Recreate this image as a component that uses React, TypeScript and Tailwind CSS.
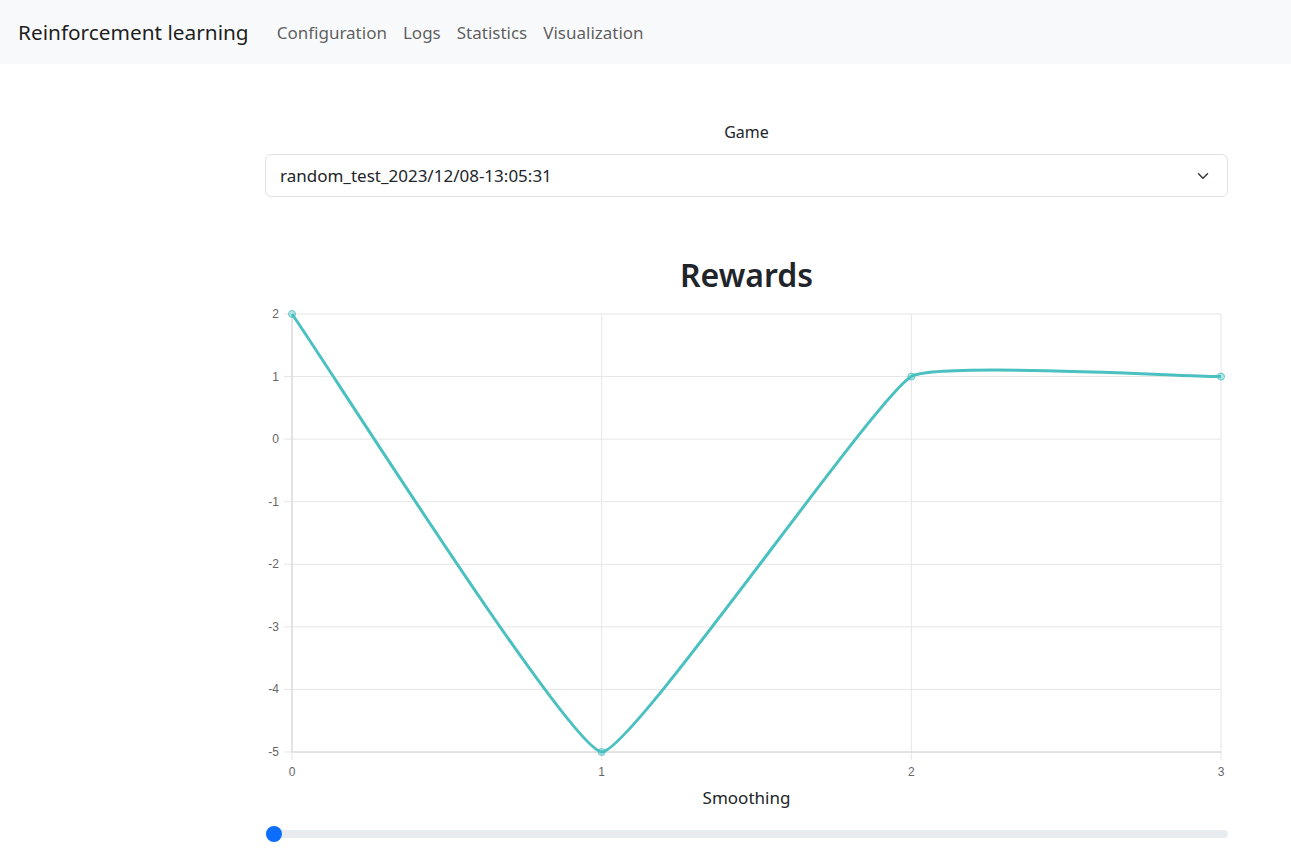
import React from 'react';

const font = { fontFamily: '"Noto Sans", "Open Sans", sans-serif' };

// chart geometry (svg coords, origin at x=265,y=300 of the page)
const LEFT = 27;
const RIGHT = 956;
const TOP = 14;
const BOTTOM = 452;
const yTicks = [2, 1, 0, -1, -2, -3, -4, -5];
const xTicks = [0, 1, 2, 3];
const yPx = (v: number) => TOP + ((2 - v) * (BOTTOM - TOP)) / 7;
const xPx = (i: number) => LEFT + (i * (RIGHT - LEFT)) / 3;

function RewardsChart() {
    const pts = [
        [xPx(0), yPx(2)],
        [xPx(1), yPx(-5)],
        [xPx(2), yPx(1)],
        [xPx(3), yPx(1)],
    ];
    // chart.js style cubic curve, tension 0.1
    const d =
        `M ${pts[0][0]} ${pts[0][1]} ` +
        `C 58 57.8, 304.5 448.7, ${pts[1][0]} ${pts[1][1]} ` +
        `C 366.4 452, 608.2 99.5, ${pts[2][0]} ${pts[2][1]} ` +
        `C 670.1 62, 925 76.6, ${pts[3][0]} ${pts[3][1]}`;

    return (
        <svg width={963} height={486} className="block mt-[6px]" style={{ fontFamily: '"Liberation Sans", Arial, sans-serif' }}>
            {yTicks.map((v) => (
                <g key={v}>
                    <line x1={19} x2={RIGHT} y1={yPx(v)} y2={yPx(v)} stroke="#e6e6e6" strokeWidth={1} />
                    <text x={14} y={yPx(v) + 4} textAnchor="end" fontSize={12} fill="#666">
                        {v}
                    </text>
                </g>
            ))}
            {xTicks.map((i) => (
                <g key={i}>
                    <line x1={xPx(i)} x2={xPx(i)} y1={TOP} y2={460} stroke="#e6e6e6" strokeWidth={1} />
                    <text x={xPx(i)} y={476} textAnchor="middle" fontSize={12} fill="#666">
                        {i}
                    </text>
                </g>
            ))}
            <line x1={LEFT} x2={LEFT} y1={TOP} y2={BOTTOM} stroke="#d4d4d4" strokeWidth={1} />
            <line x1={LEFT} x2={RIGHT} y1={BOTTOM} y2={BOTTOM} stroke="#d4d4d4" strokeWidth={1} />
            <path d={d} fill="none" stroke="rgb(75,192,192)" strokeWidth={3} strokeLinejoin="round" />
            {pts.map(([x, y], i) => (
                <circle key={i} cx={x} cy={y} r={3.5} fill="rgba(75,192,192,0.4)" stroke="rgba(75,192,192,0.8)" strokeWidth={1} />
            ))}
        </svg>
    );
}

export default function App() {
    return (
        <div className="min-h-screen bg-white text-[#212529]" style={font}>
            <nav className="h-16 bg-[#f8f9fa] flex items-center px-[18px] pt-[2px]">
                <span className="text-[20.8px] text-black/90 mr-[28px]">Reinforcement learning</span>
                <div className="flex items-center gap-[16px] text-[17px] text-black/65">
                    <span>Configuration</span>
                    <span>Logs</span>
                    <span>Statistics</span>
                    <span>Visualization</span>
                </div>
            </nav>

            <main className="ml-[265px] w-[963px]">
                <div className="mt-[56px] text-center text-[16px] leading-6">Game</div>
                <div className="mt-[10px] h-[43px] border border-[#dee2e6] rounded-md flex items-center justify-between pl-[14px] pr-[16px]">
                    <span className="text-[17px]">random_test_2023/12/08-13:05:31</span>
                    <svg width="16" height="12" viewBox="0 0 16 16" className="block">
                        <path d="m2 5 6 6 6-6" fill="none" stroke="#343a40" strokeWidth={2} strokeLinecap="round" strokeLinejoin="round" />
                    </svg>
                </div>

                <h2 className="mt-[59px] text-center text-[32px] leading-[38px] font-semibold">Rewards</h2>
                <RewardsChart />

                <div className="text-center text-[17px] leading-6">Smoothing</div>
                <div className="mt-[12px] h-6 flex items-center relative">
                    <div className="w-full h-2 rounded-full bg-[#e9ecef]" />
                    <div className="absolute left-px top-1 w-4 h-4 rounded-full bg-[#0d6efd]" />
                </div>
            </main>
        </div>
    );
}
